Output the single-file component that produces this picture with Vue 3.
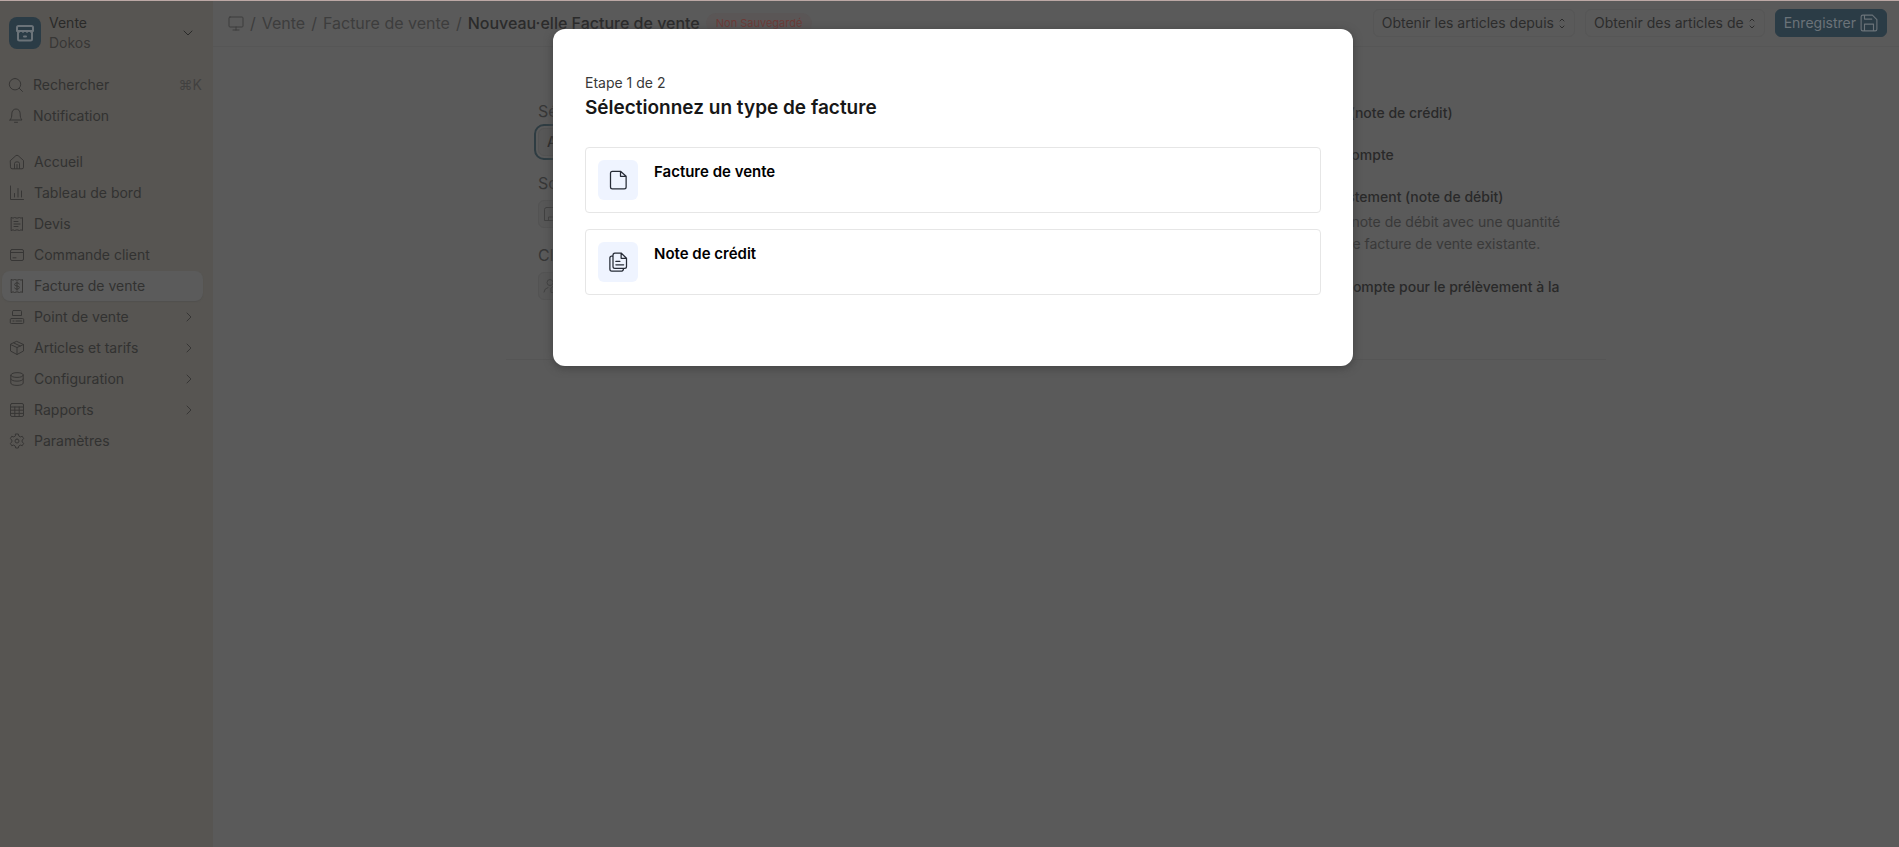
<script setup>
import {ref} from "vue"

const current = ref("Facture de vente")

const shortcuts = [
  {label: "Rechercher", icon: "search", key: "⌘K"},
  {label: "Notification", icon: "bell"},
]

const links = [
  {label: "Accueil", icon: "home"},
  {label: "Tableau de bord", icon: "chart"},
  {label: "Devis", icon: "receipt"},
  {label: "Commande client", icon: "card"},
  {label: "Facture de vente", icon: "invoice"},
  {label: "Point de vente", icon: "pos", more: true},
  {label: "Articles et tarifs", icon: "box", more: true},
  {label: "Configuration", icon: "database", more: true},
  {label: "Rapports", icon: "table", more: true},
  {label: "Paramètres", icon: "gear"},
]

// tracés en 16 x 16
const icons = {
  search: "M7 1.5a5.7 5.7 0 1 0 0 11.4a5.7 5.7 0 1 0 0-11.4M11.2 11.2L14.5 14.5",
  bell: "M2 12H14C12.6 10.5 12.2 9 12.2 6C12.2 3 10.5 1 8 1S3.8 3 3.8 6C3.8 9 3.4 10.5 2 12ZM6.5 14.3H9.5",
  home: "M1.5 6.5L6.8 1.7Q8 .8 9.2 1.7L14.5 6.5V13.2Q14.5 14.8 13 14.8H3Q1.5 14.8 1.5 13.2ZM5.5 14.5V9.5Q5.5 7.8 8 7.8T10.5 9.5V14.5M8 10.5V14.5",
  chart: "M1.5 1V14.5H14.5M5.5 12V8.5M9 12V3.5M12.5 12V6",
  receipt: "M2.5 1.5L4 2.2L5.5 1.5L8 2.2L10.5 1.5L12 2.2L13.5 1.5V14.5L12 13.8L10.5 14.5L8 13.8L5.5 14.5L4 13.8L2.5 14.5ZM5 5.5H9M5 8H11M5 10.5H9",
  card: "M3 2.5H13Q14.5 2.5 14.5 4V12Q14.5 13.5 13 13.5H3Q1.5 13.5 1.5 12V4Q1.5 2.5 3 2.5ZM1.5 5.5H14.5M4 10.8H7",
  invoice: "M2.5 1.5L4 2.2L5.5 1.5L8 2.2L10.5 1.5L12 2.2L13.5 1.5V14.5L12 13.8L10.5 14.5L8 13.8L5.5 14.5L4 13.8L2.5 14.5ZM10.3 6Q10 4.8 8 4.8T5.7 6.4T8 8T10.3 9.6T8 11.2T5.7 10M8 3.8V12.2",
  pos: "M4.5 1.5H11.5Q12.5 1.5 12.5 2.5V6.5H3.5V2.5Q3.5 1.5 4.5 1.5ZM2.5 9.5H13.5Q14.7 9.5 14.7 10.5V13.5Q14.7 14.5 13.5 14.5H2.5Q1.3 14.5 1.3 13.5V10.5Q1.3 9.5 2.5 9.5ZM4 12H5M7 12H12.5",
  box: "M8 1.5L14.5 4.5V11L8 14.5L1.5 11V4.5ZM1.5 4.5L8 7.5L14.5 4.5M8 7.5V14.5M4.8 3L11.3 6",
  database: "M1.8 4C1.8 .8 14.2 .8 14.2 4S1.8 7.2 1.8 4V12C1.8 15.2 14.2 15.2 14.2 12V4M1.8 8C1.8 11 14.2 11 14.2 8",
  table: "M3 1.5H13Q14.5 1.5 14.5 3V13Q14.5 14.5 13 14.5H3Q1.5 14.5 1.5 13V3Q1.5 1.5 3 1.5ZM1.5 5H14.5M1.5 8.2H14.5M1.5 11.4H14.5M5.8 5V14.5M10.2 5V14.5",
  gear: "M6.7 1H9.3L9.8 3L11.3 3.9L13.3 3.3L14.6 5.6L13.2 7.1V8.9L14.6 10.4L13.3 12.7L11.3 12.1L9.8 13L9.3 15H6.7L6.2 13L4.7 12.1L2.7 12.7L1.4 10.4L2.8 8.9V7.1L1.4 5.6L2.7 3.3L4.7 3.9L6.2 3ZM8 6a2 2 0 1 0 0 4a2 2 0 1 0 0-4",
  building: "M3.5 1.5H12.5Q14.5 1.5 14.5 3.5V14.5H1.5V3.5Q1.5 1.5 3.5 1.5ZM5.5 14.5V11H10.5V14.5",
  user: "M7 1.5a3 3 0 1 0 0 6a3 3 0 1 0 0-6M1 14Q1.5 10 5 9.5M11 8L14.5 10.5V14.5H8V10.5Z",
  file: "M3.5 1H10L14.5 5V13.5Q14.5 15 13 15H3.5Q2 15 2 13.5V2.5Q2 1 3.5 1ZM10 1V5H14.5",
  files: "M6 .8H10.5L14.8 5V11.5Q14.8 13 13.3 13H5.5Q4 13 4 11.5V2.5Q4 .8 5.5 .8ZM10.5 .8V5H14.8M4 3Q1.5 3 1.5 4.5V13.5Q1.5 15.2 3 15.2H11Q12.4 15.2 12.4 13M6.3 7.5H9.5M6.3 10.2H12.5",
}

const types = [
  {label: "Facture de vente", icon: "file"},
  {label: "Note de crédit", icon: "files"},
]

const checks = [
  {label: "Est un avoir (note de crédit)"},
  {label: "Facture d'acompte"},
  {
    label: "C'est un ajustement (note de débit)",
    help: "Émettre une note de débit avec une quantité de 0 pour une facture de vente existante.",
  },
  {label: "Définir un acompte pour le prélèvement à la source"},
]
</script>

<template>
  <div class="app">
    <aside class="sidebar">
      <button class="workspace" type="button">
        <span class="logo">
          <svg viewBox="0 0 20 20" width="20" height="20">
            <path d="M3.5 3H16.5Q18 3 18 4.5V8H2V4.5Q2 3 3.5 3ZM3 8V16Q3 17.5 4.5 17.5H15.5Q17 17.5 17 16V8M9 13.5H11" />
            <path class="scallop" d="M2 8L4 9.5L6 8L8 9.5L10 8L12 9.5L14 8L16 9.5L18 8" />
          </svg>
        </span>
        <span class="names">
          <span>Vente</span>
          <span class="muted">Dokos</span>
        </span>
        <svg class="icon" viewBox="0 0 16 16"><path d="M4 6L8 10L12 6" /></svg>
      </button>
      <nav class="group shortcuts">
        <a v-for="item in shortcuts" :key="item.label" class="item" href="#">
          <svg class="icon" viewBox="0 0 16 16"><path :d="icons[item.icon]" /></svg>
          <span class="text">{{ item.label }}</span>
          <kbd v-if="item.key">{{ item.key }}</kbd>
        </a>
      </nav>
      <nav class="group">
        <a
            v-for="item in links"
            :key="item.label"
            class="item"
            :class="{active: item.label === current}"
            href="#"
            @click.prevent="current = item.label"
        >
          <svg class="icon" viewBox="0 0 16 16"><path :d="icons[item.icon]" /></svg>
          <span class="text">{{ item.label }}</span>
          <svg v-if="item.more" class="icon more" viewBox="0 0 16 16"><path d="M6 4L10 8L6 12" /></svg>
        </a>
      </nav>
    </aside>

    <div class="page">
      <header class="topbar">
        <nav class="crumbs">
          <a href="#" aria-label="Bureau">
            <svg class="icon" viewBox="0 0 16 16"><path d="M2 2H14Q15 2 15 3V11Q15 12 14 12H2Q1 12 1 11V3Q1 2 2 2ZM8 12V15M5 15H11" /></svg>
          </a>
          <i>/</i><a href="#">Vente</a>
          <i>/</i><a href="#">Facture de vente</a>
          <i>/</i><strong>Nouveau·elle Facture de vente</strong>
        </nav>
        <span class="badge">Non Sauvegardé</span>
        <div class="actions">
          <button class="btn" type="button">
            Obtenir les articles depuis
            <svg viewBox="0 0 8 16" width="8" height="16"><path d="M2 6L4 4L6 6M2 11L4 13L6 11" /></svg>
          </button>
          <button class="btn" type="button">
            Obtenir des articles de
            <svg viewBox="0 0 8 16" width="8" height="16"><path d="M2 6L4 4L6 6M2 11L4 13L6 11" /></svg>
          </button>
          <button class="btn primary" type="button">
            Enregistrer
            <svg viewBox="0 0 16 16" width="18" height="18"><path d="M2.5 1H11L15 5V13.5Q15 15 13.5 15H2.5Q1 15 1 13.5V2.5Q1 1 2.5 1ZM4 1V4.5H10.5M4 15V9H12V15" /></svg>
          </button>
        </div>
      </header>

      <form class="form" @submit.prevent>
        <div class="column">
          <label for="serie">Série</label>
          <div class="control focused">
            <select id="serie"><option>ACC-SINV-.YYYY.-</option></select>
          </div>
          <label for="societe">Société</label>
          <div class="control">
            <svg class="icon" viewBox="0 0 16 16"><path :d="icons.building" /></svg>
            <input id="societe" type="text" />
          </div>
          <label for="client">Client</label>
          <div class="control">
            <svg class="icon" viewBox="0 0 16 16"><path :d="icons.user" /></svg>
            <input id="client" type="text" />
          </div>
        </div>
        <div class="column"></div>
        <div class="column checks">
          <div v-for="check in checks" :key="check.label" class="check">
            <label><input type="checkbox" /><span>{{ check.label }}</span></label>
            <p v-if="check.help">{{ check.help }}</p>
          </div>
        </div>
      </form>
    </div>

    <div class="backdrop">
      <section class="dialog" role="dialog" aria-modal="true" aria-labelledby="dialog-title">
        <p class="step">Etape 1 de 2</p>
        <h2 id="dialog-title">Sélectionnez un type de facture</h2>
        <button v-for="type in types" :key="type.label" class="choice" type="button">
          <span class="tile">
            <svg viewBox="0 0 16 16" width="20" height="20"><path :d="icons[type.icon]" /></svg>
          </span>
          <span>{{ type.label }}</span>
        </button>
      </section>
    </div>
  </div>
</template>

<style>
body {
  background: #5a5a5a;
}
</style>

<style scoped>
* {
  box-sizing: border-box;
}
.app {
  display: flex;
  min-height: 100vh;
  border-top: 1px solid #bca8a5;
  color: #323231;
  font-family: Inter, "Liberation Sans", sans-serif;
  font-size: 14px;
  line-height: 20px;
}
a {
  color: inherit;
  text-decoration: none;
}
button,
input,
select {
  font: inherit;
  color: inherit;
}
p,
h2 {
  margin: 0;
}
svg {
  flex: none;
  fill: none;
  stroke: currentColor;
  stroke-linecap: round;
  stroke-linejoin: round;
}
.icon {
  width: 16px;
  height: 16px;
}

.sidebar {
  flex: none;
  width: 213px;
  padding: 12px 10px 12px 2px;
  background: #575552;
}
.workspace {
  display: flex;
  align-items: center;
  gap: 8px;
  width: 100%;
  padding: 0 7px;
  border: 0;
  background: none;
  color: #2a2a29;
  text-align: left;
}
.logo {
  display: grid;
  place-items: center;
  width: 32px;
  height: 32px;
  border-radius: 8px;
  background: #2b3c46;
  color: #6b7379;
}
.logo svg {
  stroke-width: 2;
}
.logo .scallop {
  stroke-width: 1;
}
.names {
  display: flex;
  flex: 1;
  flex-direction: column;
}
.muted {
  color: #383736;
}
.group {
  display: flex;
  flex-direction: column;
  gap: 1px;
  margin-top: 16px;
}
.group.shortcuts {
  margin-top: 17px;
}
.item {
  display: flex;
  align-items: center;
  gap: 9px;
  height: 30px;
  padding: 0 6px 0 7px;
  border-radius: 8px;
}
.shortcuts .item {
  padding: 0 1px 0 6px;
}
.item .text {
  flex: 1;
}
.item .icon {
  color: #373635;
}
.item.active {
  background: #5b5b5b;
  box-shadow: 0 1px 1px #51504e;
}
kbd {
  color: #424140;
  font: inherit;
}

.page {
  flex: 1;
  min-width: 0;
  background: #5a5a5a;
}
.topbar {
  display: flex;
  align-items: center;
  height: 46px;
  padding: 0 12px 1px 15px;
  border-bottom: 1px solid #565656;
}
.crumbs {
  display: flex;
  align-items: center;
  gap: 6px;
  color: #3d3d3d;
  font-size: 16px;
}
.crumbs a {
  display: flex;
}
.crumbs i {
  font-style: normal;
}
.crumbs strong {
  color: #2b2b2b;
  font-weight: 500;
}
.badge {
  margin-left: 6px;
  padding: 0 10px;
  border-radius: 10px;
  background: #5a5656;
  color: #6c3a36;
  font-size: 11px;
}
.actions {
  display: flex;
  gap: 10px;
  margin-left: auto;
}
.btn {
  display: flex;
  align-items: center;
  gap: 4px;
  height: 28px;
  padding: 0 8px;
  border: 1px solid #565656;
  border-radius: 6px;
  background: #5a5a5a;
  color: #2c2c2c;
}
.btn.primary {
  border-color: #2b3c46;
  background: #2b3c46;
  color: #6b7379;
}

.form {
  display: grid;
  grid-template-columns: 1fr 1fr 1fr;
  gap: 30px;
  max-width: 1100px;
  margin: 0 auto;
  padding: 54px 36px 42px 32px;
  border-bottom: 1px solid #555;
}
.column > label {
  display: block;
  margin-bottom: 7px;
  color: #363636;
  font-size: 16px;
}
.control {
  display: flex;
  align-items: center;
  gap: 6px;
  height: 28px;
  margin-bottom: 17px;
  padding: 0 4px;
  border: 1px solid #535353;
  border-radius: 6px;
  background: #575757;
}
.control .icon {
  color: #414141;
}
.control input,
.control select {
  flex: 1;
  min-width: 0;
  border: 0;
  background: none;
  outline: 0;
  appearance: none;
}
.control.focused {
  padding: 0 8px;
  outline: 2px solid #2e3c42;
  outline-offset: 2px;
  color: #292929;
  font-weight: 500;
}
.checks {
  padding-top: 2px;
}
.check {
  margin-bottom: 22px;
  color: #292929;
  font-weight: 500;
}
.check label {
  display: flex;
  align-items: flex-start;
  gap: 8px;
}
.check input {
  flex: none;
  width: 14px;
  height: 14px;
  margin: 3px 0 0;
}
.check p {
  margin-top: 4px;
  padding-left: 22px;
  color: #393939;
  font-weight: 400;
  line-height: 22px;
}
.check:last-child {
  margin-bottom: 0;
}

.backdrop {
  position: absolute;
  inset: 0;
  display: flex;
  align-items: flex-start;
  justify-content: center;
  padding: 29px 0 0 7px;
}
.dialog {
  width: 800px;
  max-width: 100%;
  padding: 44px 32px 55px;
  border-radius: 12px;
  background: #fff;
  box-shadow: 0 2px 8px #424242;
}
.step {
  margin-bottom: 1px;
  color: #383838;
}
h2 {
  margin-bottom: 25px;
  color: #171717;
  font-size: 19px;
  font-weight: 600;
  line-height: 28px;
}
.choice {
  display: flex;
  align-items: flex-start;
  gap: 16px;
  width: 100%;
  margin-bottom: 16px;
  padding: 12px;
  border: 1px solid #e6e6e6;
  border-radius: 4px;
  background: #fff;
  color: #000;
  font-size: 15px;
  font-weight: 600;
  line-height: 24px;
  text-align: left;
}
.tile {
  display: grid;
  place-items: center;
  width: 40px;
  height: 40px;
  border-radius: 6px;
  background: #eff4ff;
  color: #262b36;
}
</style>
